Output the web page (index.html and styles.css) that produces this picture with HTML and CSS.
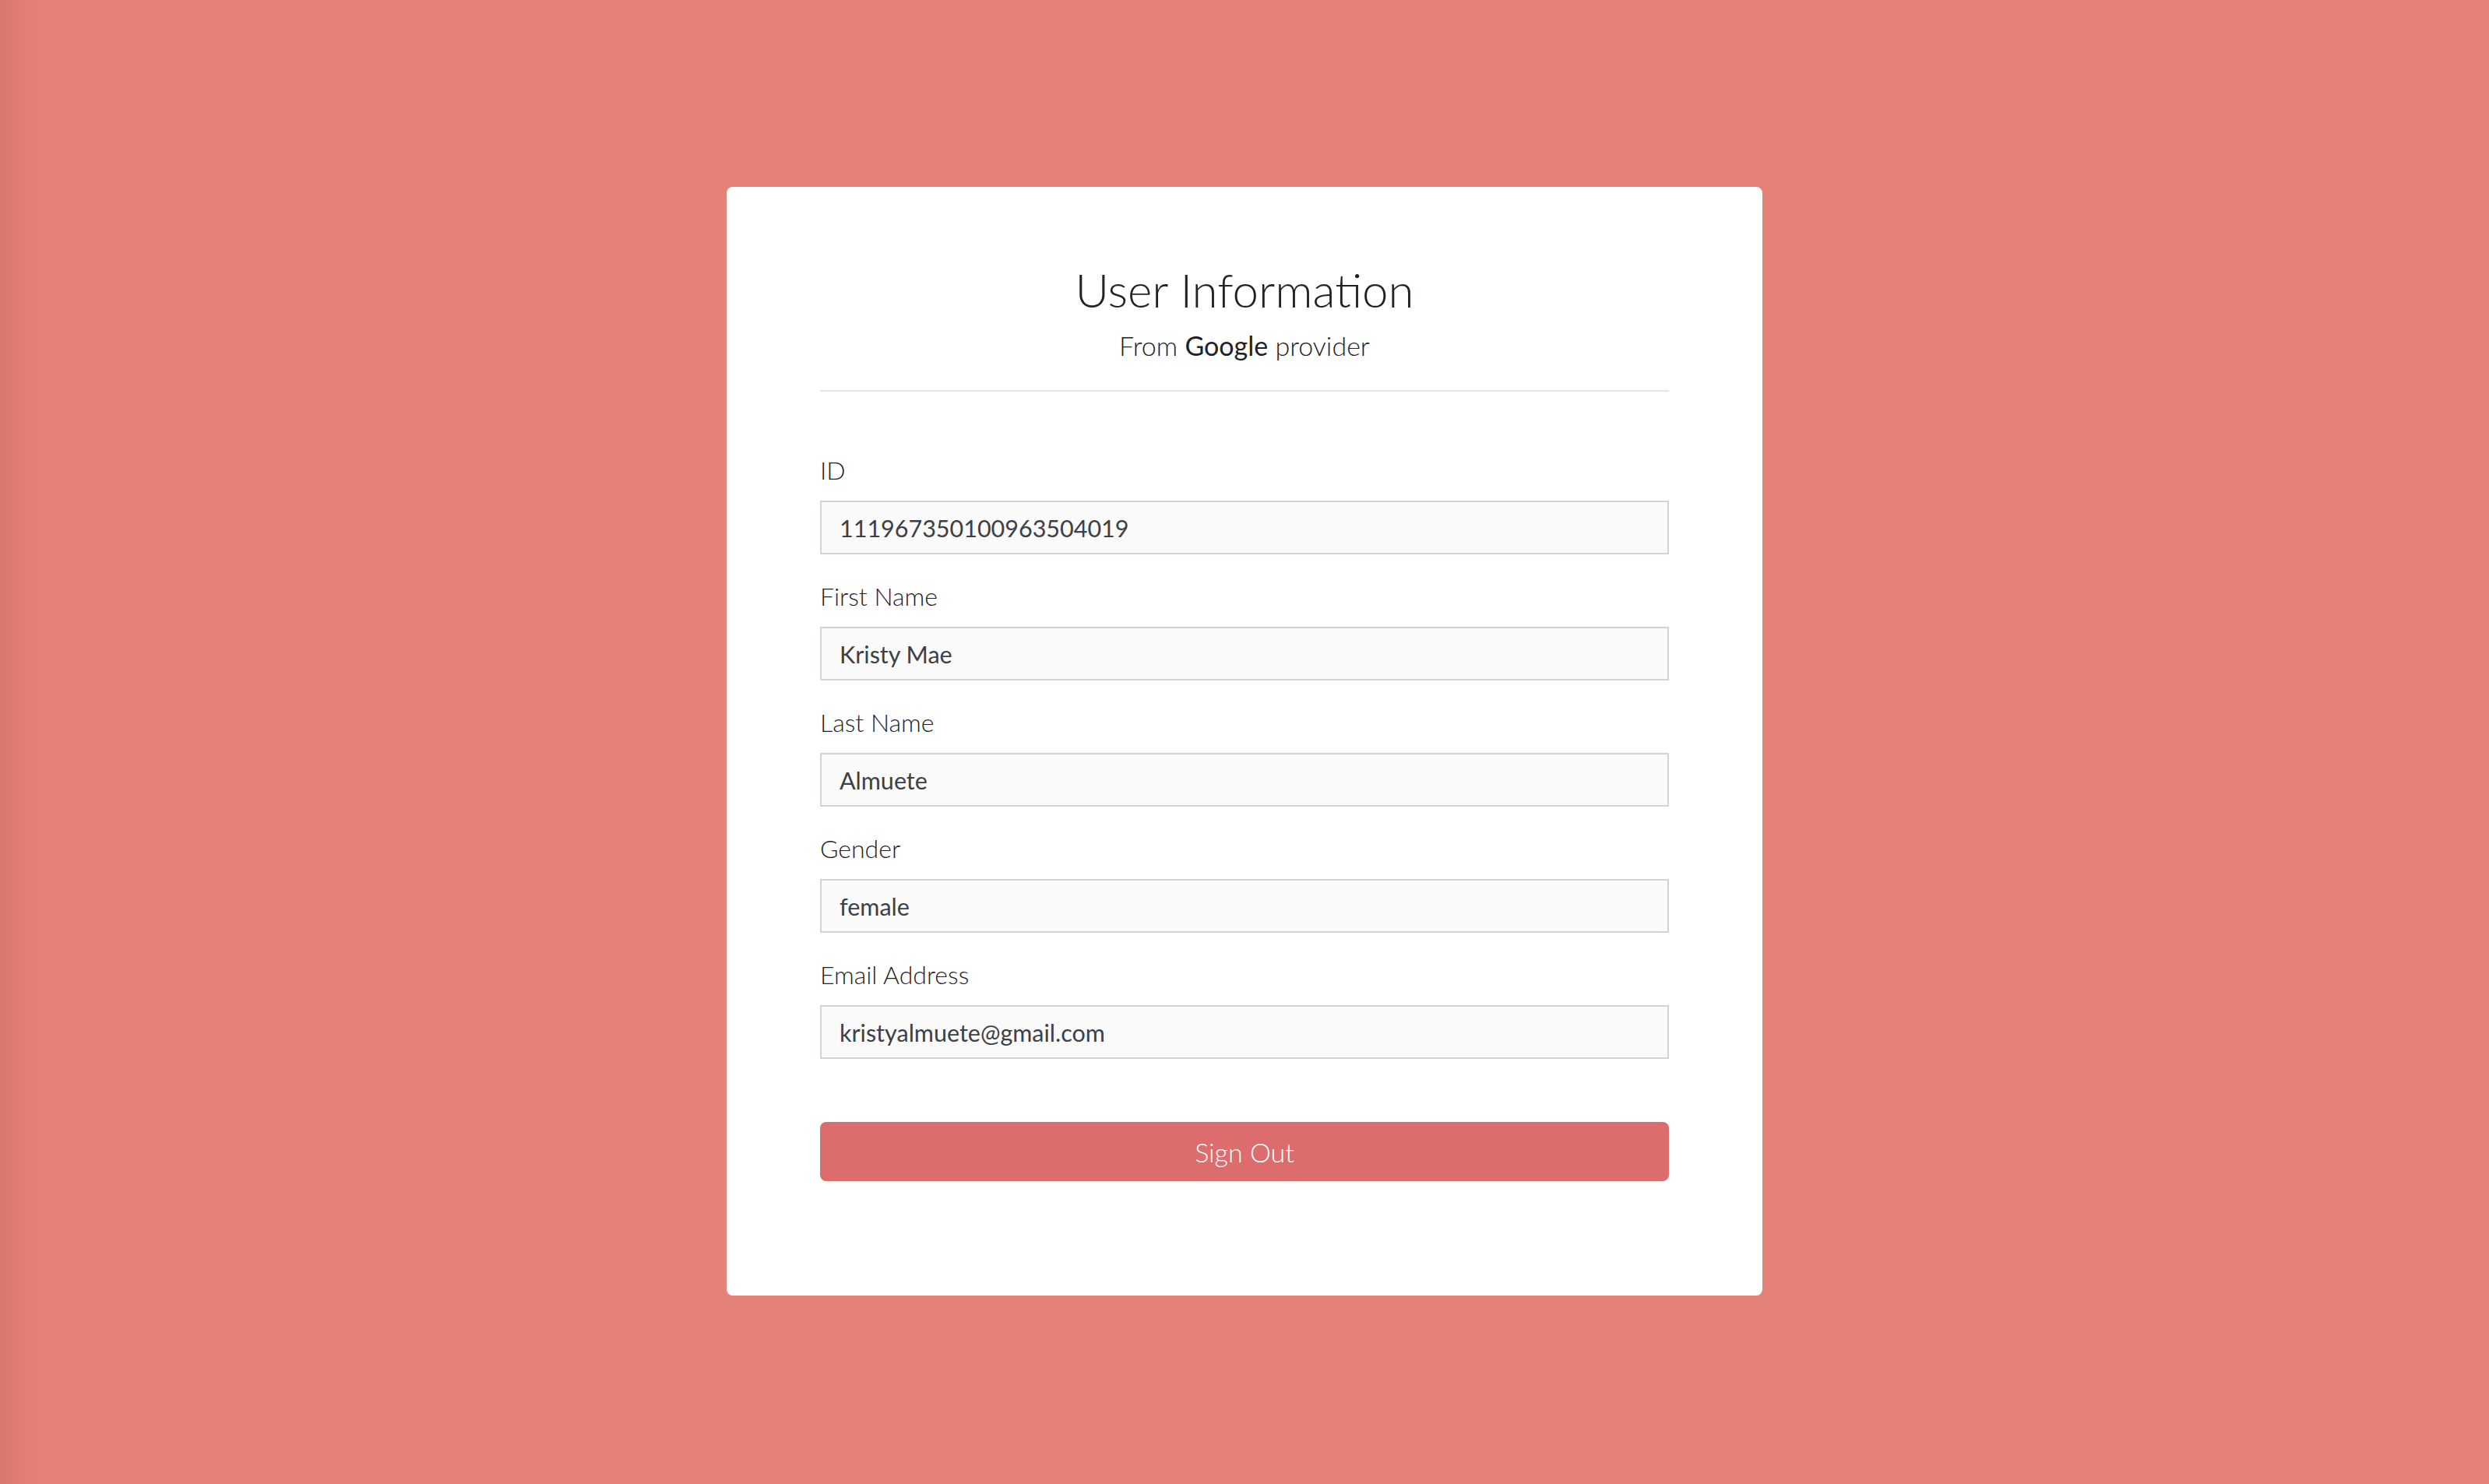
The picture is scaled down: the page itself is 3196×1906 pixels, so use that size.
FILE: index.html
```html
<!DOCTYPE html>
<html lang="en">
<head>
<meta charset="utf-8">
<title>User Information</title>
<link rel="stylesheet" href="styles.css">
</head>
<body>
<main class="page">
  <section class="card">
    <header class="card-head">
      <h1 class="title">User Information</h1>
      <p class="subtitle">From <span class="provider">Google</span> provider</p>
    </header>
    <hr class="divider">
    <form class="form">
      <div class="group">
        <label class="label">ID</label>
        <div class="input">111967350100963504019</div>
      </div>
      <div class="group">
        <label class="label">First Name</label>
        <div class="input">Kristy Mae</div>
      </div>
      <div class="group">
        <label class="label">Last Name</label>
        <div class="input">Almuete</div>
      </div>
      <div class="group">
        <label class="label">Gender</label>
        <div class="input">female</div>
      </div>
      <div class="group">
        <label class="label">Email Address</label>
        <div class="input">kristyalmuete@gmail.com</div>
      </div>
      <button type="button" class="btn">Sign Out</button>
    </form>
  </section>
</main>
</body>
</html>
```
FILE: styles.css
```css
html, body {
  margin: 0;
  padding: 0;
}
body {
  min-height: 1906px;
  background-color: #e48278;
  background-image: linear-gradient(to right, rgba(150, 60, 50, 0.16) 0px, rgba(150, 60, 50, 0.06) 28px, rgba(150, 60, 50, 0) 60px);
  font-family: "Lato", "Open Sans", "Liberation Sans", sans-serif;
  color: #212529;
}
.page {
  display: flex;
  justify-content: center;
  padding-top: 240px;
}
.card {
  width: 1330px;
  box-sizing: border-box;
  background: #ffffff;
  border-radius: 8px;
  padding: 96px 120px 147px 120px;
}
.card-head {
  text-align: center;
}
.title {
  margin: 0;
  font-size: 60px;
  line-height: 72px;
  font-weight: 300;
  color: #1f2327;
}
.subtitle {
  margin: 12px 0 0 0;
  font-size: 34px;
  line-height: 48px;
  font-weight: 300;
  color: #1f2327;
}
.provider {
  font-weight: 400;
}
.divider {
  margin: 33px 0 0 0;
  border: 0;
  height: 2px;
  background: #e6e6e6;
}
.form {
  display: flex;
  flex-direction: column;
  padding-top: 77px;
}
.group {
  display: flex;
  flex-direction: column;
  margin-bottom: 30px;
}
.label {
  font-size: 32px;
  line-height: 47px;
  font-weight: 300;
  color: #1f2327;
  margin-bottom: 16px;
}
.input {
  box-sizing: border-box;
  height: 69px;
  border: 2px solid #ced4da;
  background: #fafafa;
  padding: 0 23px;
  display: flex;
  align-items: center;
  font-size: 30.5px;
  font-weight: 400;
  color: #3b4147;
}
.btn {
  margin-top: 51px;
  height: 76px;
  border: 0;
  border-radius: 8px;
  background: #dd6c6c;
  color: #ffffff;
  font-family: "Lato", "Open Sans", "Liberation Sans", sans-serif;
  font-size: 34px;
  font-weight: 300;
  cursor: pointer;
}
```
